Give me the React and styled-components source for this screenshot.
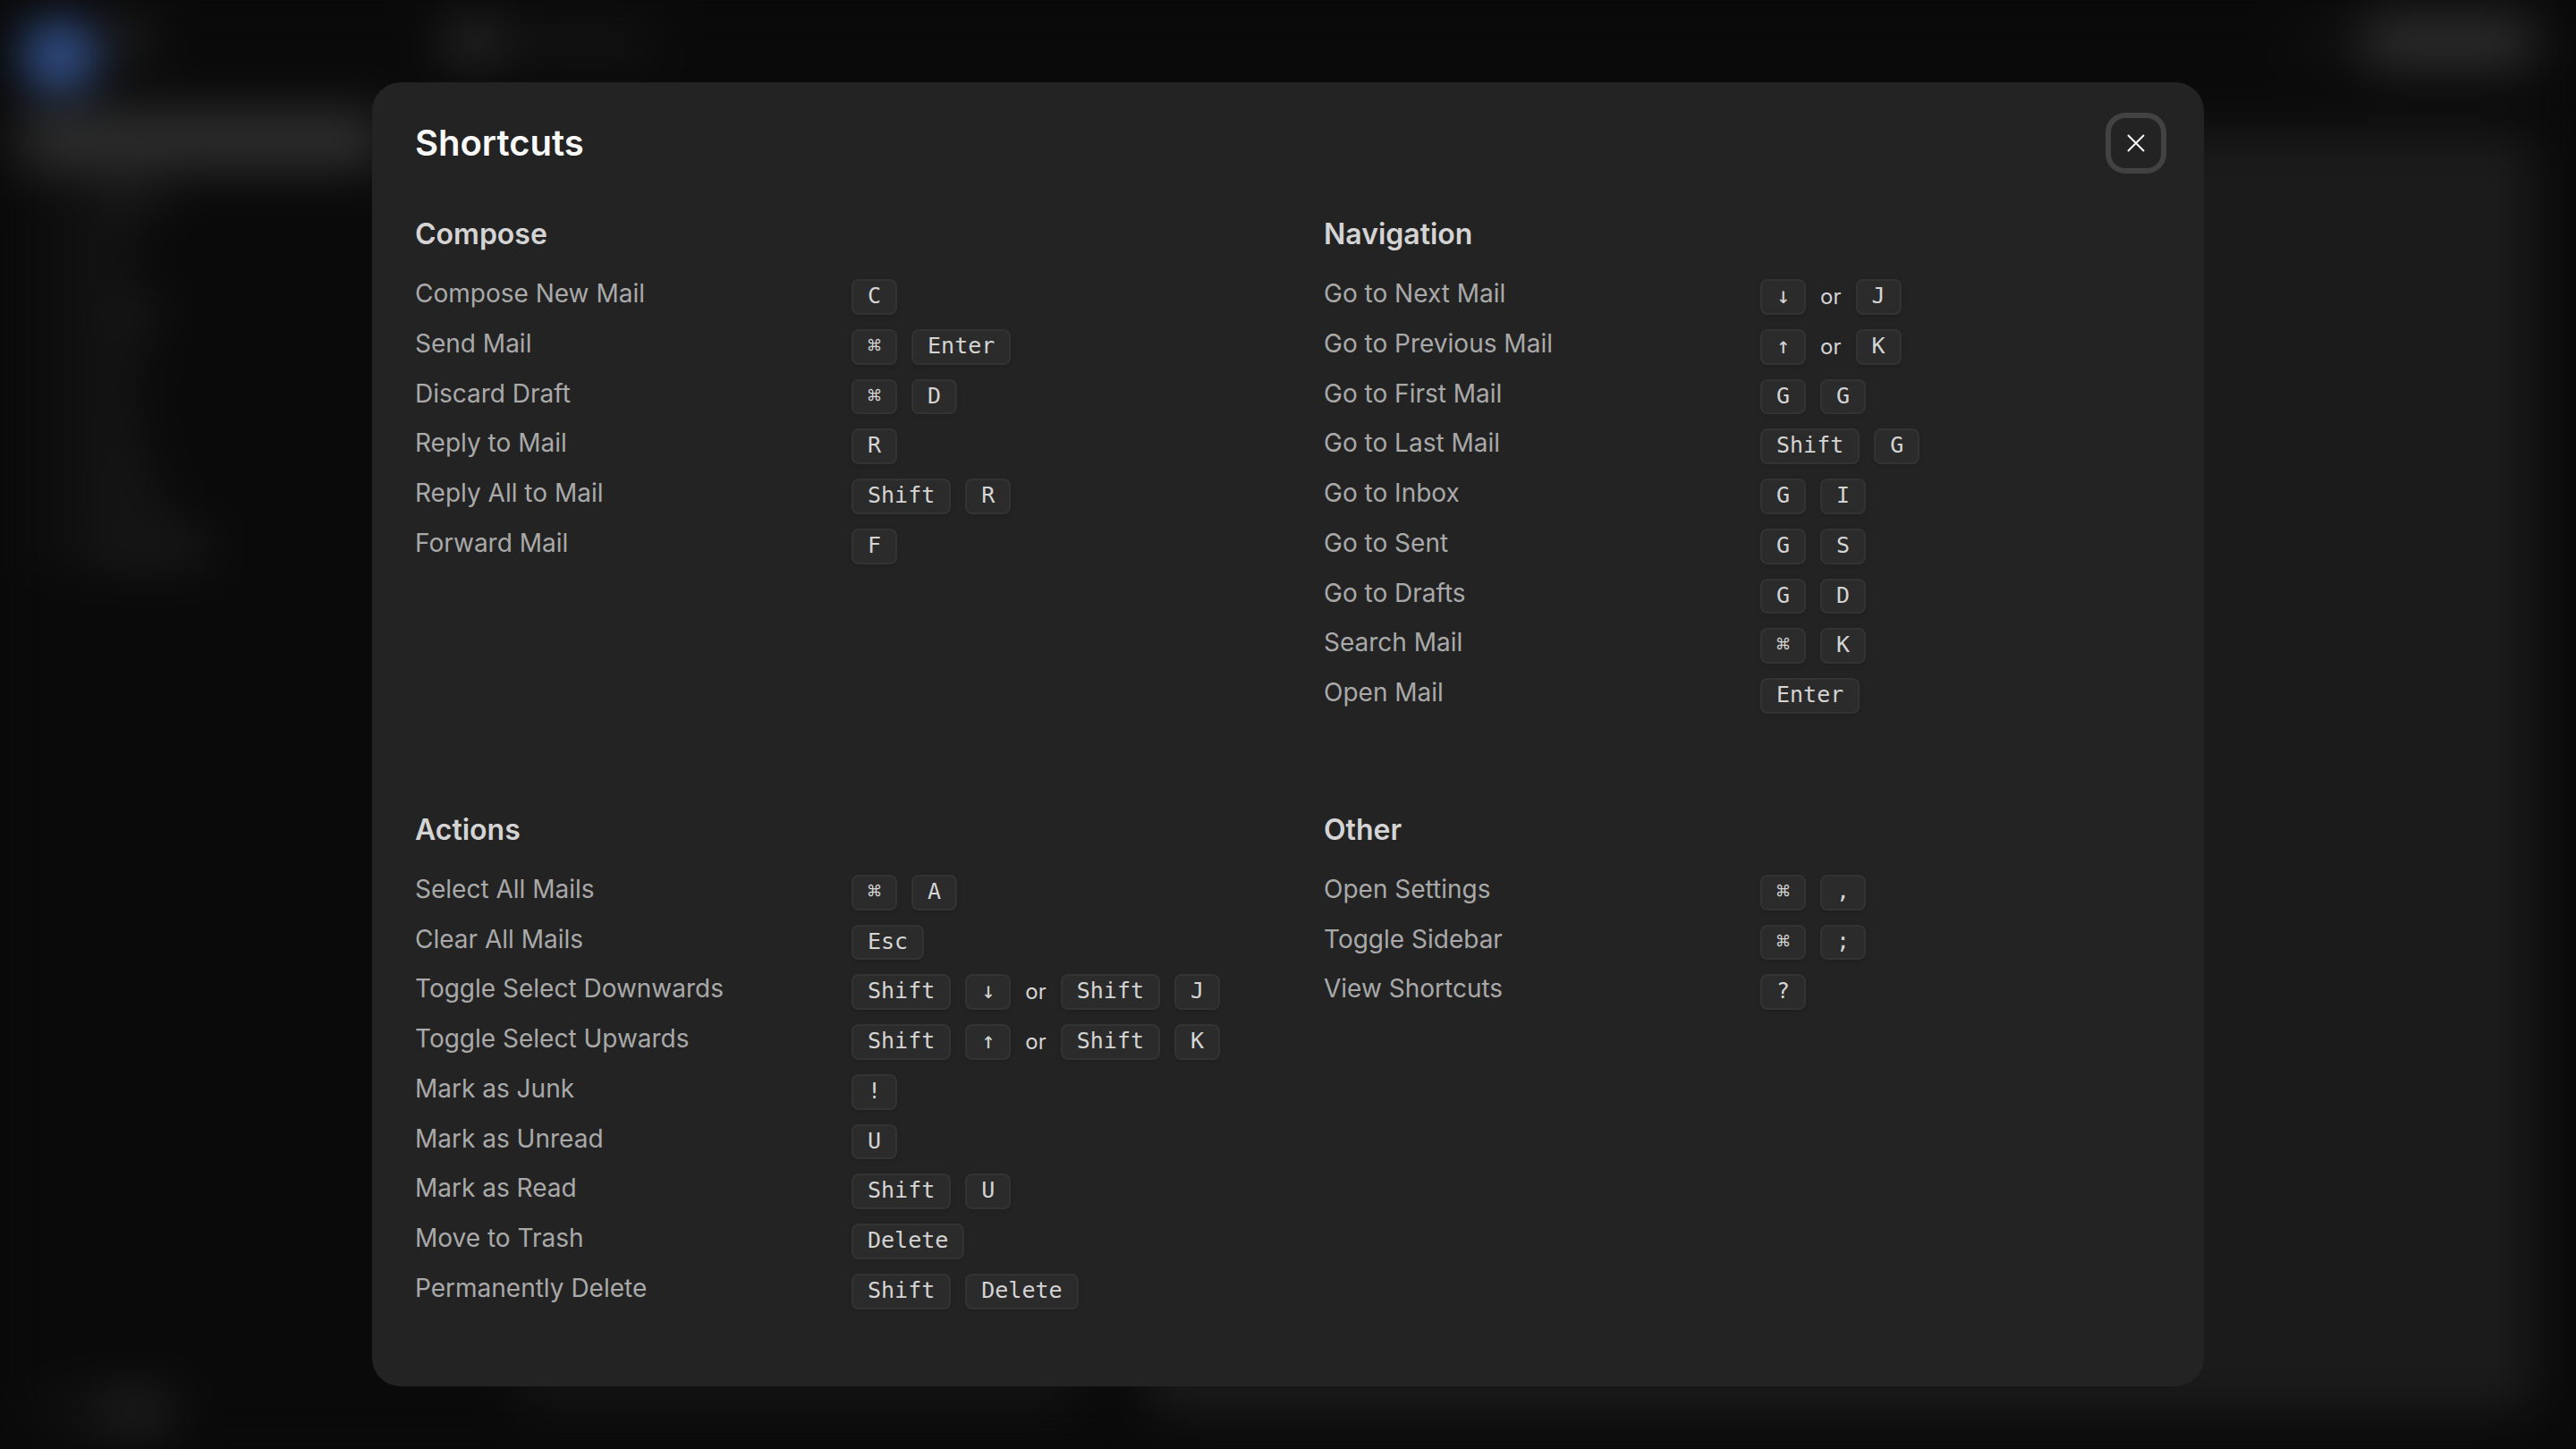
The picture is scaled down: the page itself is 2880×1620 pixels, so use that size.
import React from 'react';
import styled, { createGlobalStyle } from 'styled-components';

const GlobalStyle = createGlobalStyle`
  * {
    box-sizing: border-box;
  }
  body {
    margin: 0;
    background-color: #0a0a0a;
    color: #d4d4d4;
    font-family: Inter, 'Liberation Sans', sans-serif;
    font-optical-sizing: none;
  }
`;

const Page = styled.div`
  position: relative;
  min-height: 100vh;
  overflow: hidden;
`;

/* mail app behind the dialog */

const Backdrop = styled.div`
  position: absolute;
  inset: 0;
  display: grid;
  grid-template-columns: 440px 1fr;
  background-color: #0a0a0a;
  filter: blur(28px);
`;

const Sidebar = styled.div`
  display: flex;
  flex-direction: column;
  padding: 26px 12px 16px 20px;
`;

const Account = styled.div`
  display: flex;
  gap: 16px;
  height: 72px;
  margin-bottom: 28px;
  padding-left: 8px;
`;

const Avatar = styled.div`
  width: 76px;
  height: 72px;
  border-radius: 50%;
  background-color: #3e65b0;
`;

const NavItem = styled.div`
  display: flex;
  align-items: center;
  height: 60px;
  margin-bottom: 5px;
  padding-left: 20px;
  gap: 24px;
  border-radius: 16px;
  background-color: ${({ $active }) => ($active ? '#323232' : 'transparent')};
`;

const Smudge = styled.div`
  width: ${({ $width }) => $width}px;
  height: 32px;
  border-radius: 8px;
  background-color: ${({ $color }) => $color || '#202020'};
`;

const Profile = styled.div`
  display: flex;
  gap: 24px;
  margin-top: auto;
  padding: 0 0 10px 24px;
`;

const Main = styled.div`
  display: flex;
  flex-direction: column;
`;

const TopBar = styled.div`
  display: flex;
  align-items: center;
  gap: 16px;
  height: 92px;
  padding: 0 46px 0 56px;
`;

const TopActions = styled.div`
  display: flex;
  align-items: center;
  gap: 32px;
  margin-left: auto;
`;

const ComposeBlock = styled.div`
  width: 196px;
  height: 56px;
  border-radius: 16px;
  background-color: #303030;
`;

const Panes = styled.div`
  flex: 1;
  display: grid;
  grid-template-columns: 2fr 5fr;
  gap: 80px;
  padding: 56px 46px 40px 140px;
`;

const MailPane = styled.div`
  background-color: #131313;
`;

const PreviewPane = styled.div`
  border-radius: 24px;
  background-color: #1b1b1b;
`;

/* dialog */

const Overlay = styled.div`
  position: relative;
  display: flex;
  justify-content: center;
  align-items: flex-start;
  min-height: 100vh;
  padding: 92px 32px 0;
`;

const Dialog = styled.div`
  width: 100%;
  max-width: 2048px;
  min-height: 90vh;
  padding: 40px 48px 48px;
  border-radius: 32px;
  background-color: #232323;
`;

const Header = styled.header`
  display: flex;
  justify-content: space-between;
  align-items: center;
  height: 56px;
  margin-bottom: 52px;
`;

const Title = styled.h2`
  margin: 0;
  color: #fafafa;
  font-size: 40px;
  line-height: 56px;
  font-weight: 600;
`;

const CloseButton = styled.button`
  display: flex;
  justify-content: center;
  align-items: center;
  width: 56px;
  height: 56px;
  padding: 0;
  border: none;
  border-radius: 16px;
  background: none;
  color: #fafafa;
  box-shadow: 0 0 0 6px #424242;
  cursor: pointer;
`;

const Sections = styled.div`
  display: grid;
  grid-template-columns: 1fr 1fr;
  gap: 108px 80px;
`;

const SectionTitle = styled.h3`
  margin: 0 0 28px;
  color: #d4d4d4;
  font-size: 32px;
  line-height: 44px;
  font-weight: 600;
`;

const List = styled.dl`
  display: flex;
  flex-direction: column;
  gap: 16px;
  margin: 0;
`;

const Row = styled.div`
  display: grid;
  grid-template-columns: 1fr 1fr;
  align-items: start;
  gap: 40px;
`;

const Label = styled.dt`
  color: #a9a9a9;
  font-size: 28px;
  line-height: 32px;
`;

const Keys = styled.dd`
  display: flex;
  align-items: center;
  gap: 16px;
  margin: 0;
  white-space: nowrap;
`;

const Key = styled.kbd`
  padding: 0 16px 2px;
  border: 2px solid #333333;
  border-radius: 8px;
  background-color: #2b2b2b;
  box-shadow: 0 2px 4px rgba(0, 0, 0, 0.12);
  color: #d4d4d4;
  font-family: 'DejaVu Sans Mono', monospace;
  font-size: 25px;
  line-height: 1.35;
`;

const Or = styled.span`
  font-size: 24px;
  line-height: 32px;
`;

const sections = [
  {
    title: 'Compose',
    items: [
      ['Compose New Mail', ['C']],
      ['Send Mail', ['⌘', 'Enter']],
      ['Discard Draft', ['⌘', 'D']],
      ['Reply to Mail', ['R']],
      ['Reply All to Mail', ['Shift', 'R']],
      ['Forward Mail', ['F']],
    ],
  },
  {
    title: 'Navigation',
    items: [
      ['Go to Next Mail', ['↓', 'or', 'J']],
      ['Go to Previous Mail', ['↑', 'or', 'K']],
      ['Go to First Mail', ['G', 'G']],
      ['Go to Last Mail', ['Shift', 'G']],
      ['Go to Inbox', ['G', 'I']],
      ['Go to Sent', ['G', 'S']],
      ['Go to Drafts', ['G', 'D']],
      ['Search Mail', ['⌘', 'K']],
      ['Open Mail', ['Enter']],
    ],
  },
  {
    title: 'Actions',
    items: [
      ['Select All Mails', ['⌘', 'A']],
      ['Clear All Mails', ['Esc']],
      ['Toggle Select Downwards', ['Shift', '↓', 'or', 'Shift', 'J']],
      ['Toggle Select Upwards', ['Shift', '↑', 'or', 'Shift', 'K']],
      ['Mark as Junk', ['!']],
      ['Mark as Unread', ['U']],
      ['Mark as Read', ['Shift', 'U']],
      ['Move to Trash', ['Delete']],
      ['Permanently Delete', ['Shift', 'Delete']],
    ],
  },
  {
    title: 'Other',
    items: [
      ['Open Settings', ['⌘', ',']],
      ['Toggle Sidebar', ['⌘', ';']],
      ['View Shortcuts', ['?']],
    ],
  },
];

const navWidths = [90, 50, 85, 60, 65, 85, 140];

const MailBackdrop = () => (
  <Backdrop aria-hidden="true">
    <Sidebar>
      <Account>
        <Avatar />
        <Smudge $width={48} $color="#2c2c2c" />
      </Account>
      <NavItem $active />
      {navWidths.map((width, i) => (
        <NavItem key={i}>
          <Smudge $width={28} $color="#181818" />
          <Smudge $width={width} />
        </NavItem>
      ))}
      <Profile>
        <Smudge $width={36} $color="#181818" />
        <Smudge $width={90} $color="#2a2a2a" />
      </Profile>
    </Sidebar>
    <Main>
      <TopBar>
        <Smudge $width={70} $color="#363636" />
        <Smudge $width={150} $color="#181818" />
        <TopActions>
          <Smudge $width={36} $color="#181818" />
          <ComposeBlock />
        </TopActions>
      </TopBar>
      <Panes>
        <MailPane />
        <PreviewPane />
      </Panes>
    </Main>
  </Backdrop>
);

const Section = ({ title, items }) => (
  <section>
    <SectionTitle>{title}</SectionTitle>
    <List>
      {items.map(([label, keys]) => (
        <Row key={label}>
          <Label>{label}</Label>
          <Keys>
            {keys.map((key, i) => (
              key === 'or' ? <Or key={i}>or</Or> : <Key key={i}>{key}</Key>
            ))}
          </Keys>
        </Row>
      ))}
    </List>
  </section>
);

const App = () => (
  <Page>
    <GlobalStyle />
    <MailBackdrop />
    <Overlay>
      <Dialog role="dialog" aria-modal="true" aria-labelledby="shortcuts-title">
        <Header>
          <Title id="shortcuts-title">Shortcuts</Title>
          <CloseButton type="button" aria-label="Close">
            <svg width="20" height="20" viewBox="0 0 20 20" fill="none" stroke="currentColor" strokeWidth="2">
              <path d="M1 1l18 18M19 1L1 19" />
            </svg>
          </CloseButton>
        </Header>
        <Sections>
          {sections.map((section) => (
            <Section key={section.title} {...section} />
          ))}
        </Sections>
      </Dialog>
    </Overlay>
  </Page>
);

export default App;
